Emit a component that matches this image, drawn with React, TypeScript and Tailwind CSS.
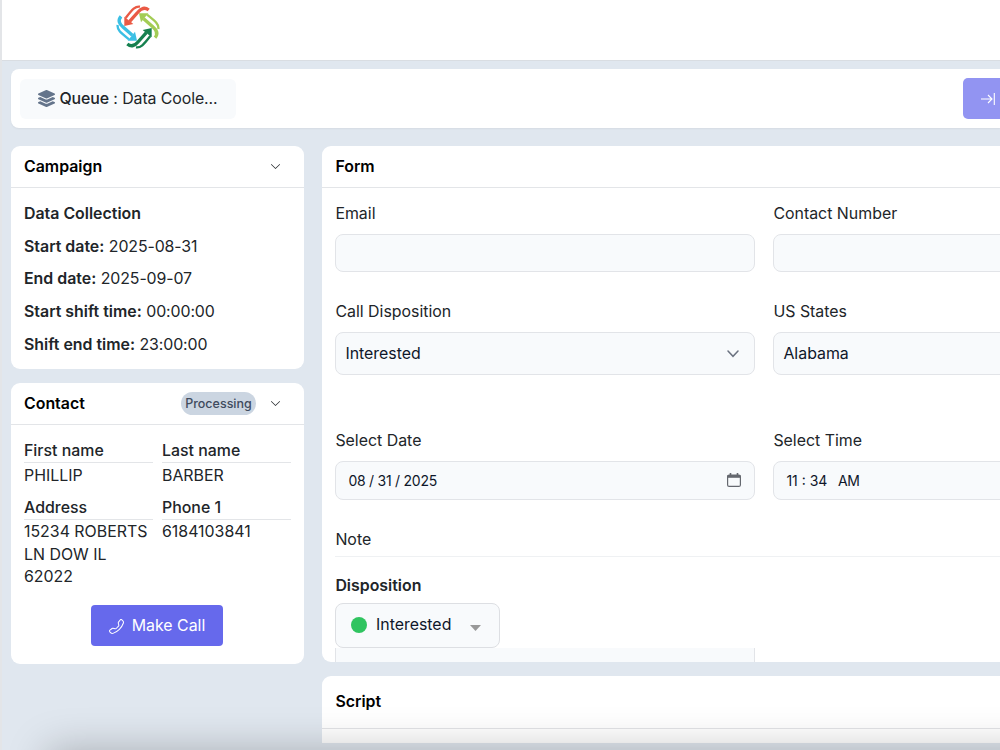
import React from "react";
import { FaLayerGroup } from "react-icons/fa";
import { BsChevronDown, BsTelephone } from "react-icons/bs";

const campaignRows = [
  { label: "Start date:", value: "2025-08-31" },
  { label: "End date:", value: "2025-09-07" },
  { label: "Start shift time:", value: "00:00:00" },
  { label: "Shift end time:", value: "23:00:00" },
];

const logoArrows = [
  { angle: 0, color: "#ea5a45" },
  { angle: 90, color: "#a3cc55" },
  { angle: 180, color: "#16804f" },
  { angle: 270, color: "#3bbfe4" },
];

const Logo = () => (
  <svg width="44" height="44" viewBox="-66 -66 132 132">
    {logoArrows.map((arrow) => (
      <g key={arrow.angle} transform={`rotate(${arrow.angle})`}>
        <path
          d="M6 -61C-8 -63 -16 -54 -37 -27"
          fill="none"
          stroke={arrow.color}
          strokeWidth="7"
        />
        <path
          d="M32 -51C20 -61 10 -57 0 -45L-25 -17"
          fill="none"
          stroke={arrow.color}
          strokeWidth="10"
        />
        <path d="M-41 -3L-41 -31L-14 -9Z" fill={arrow.color} />
      </g>
    ))}
  </svg>
);

const Field = ({ label, children }: { label: string; children: React.ReactNode }) => (
  <div className="flex flex-col">
    <label className="h-6 leading-[23px]">{label}</label>
    {children}
  </div>
);

const ContactItem = ({ label, value }: { label: string; value: string }) => (
  <div>
    <div className="h-[23px] border-b border-[#e3e5e8] font-medium leading-[22px]">{label}</div>
    <div className="pt-[1.5px] leading-[22.6px]">{value}</div>
  </div>
);

const App = () => {
  return (
    <div className="relative flex h-[750px] w-[1000px] flex-col overflow-hidden border-l-2 border-[#e3e5e8] bg-[#e0e7ef] font-['Inter',sans-serif] text-[15.9px] text-[#212529]">
      {/* Header */}
      <header className="h-[61px] shrink-0 border-b border-[#d9dde2] bg-white pl-[114px] pt-[5px]">
        <Logo />
      </header>

      {/* Toolbar */}
      <div className="ml-[9px] mt-2 flex h-[59px] shrink-0 items-center justify-between rounded-l-lg bg-white pl-[9px] shadow-xs">
        <div className="flex h-10 w-[216px] items-center rounded-md bg-[#f8fafc] pl-[18px]">
          <FaLayerGroup className="mr-[4.5px] size-[17px] text-[#64748b]" />
          <span className="pt-px tracking-[-0.1px]">
            <span className="font-medium">Queue</span> : Data Coole...
          </span>
        </div>
        <button className="flex h-[41px] w-[37px] items-center rounded-l-[5px] bg-[#9294f2] pl-[18px]">
          <svg width="14" height="12" viewBox="0 0 14 12" fill="none" stroke="white" strokeWidth="1.1">
            <path d="M0 6H10.5M7 2L11 6L7 10M13.3 0V12" />
          </svg>
        </button>
      </div>

      <div className="flex gap-[18px] pl-[9px] pt-[18px]">
        {/* Left column */}
        <div className="flex w-[293px] shrink-0 flex-col gap-[14px]">
          <section className="h-[223px] rounded-[9px] bg-white">
            <div className="flex h-[41.5px] items-center justify-between border-b border-[#e3e5e8] pl-[13px] pr-[23px]">
              <h2 className="pt-[2px] font-semibold text-black">Campaign</h2>
              <BsChevronDown className="size-[11px]" />
            </div>
            <div className="flex flex-col gap-[10px] px-[13px] pt-[15.3px] leading-[22.7px]">
              <div className="font-semibold">Data Collection</div>
              {campaignRows.map((row) => (
                <div key={row.label}>
                  <span className="font-semibold">{row.label}</span>{" "}
                  <span className="tracking-[-0.1px]">{row.value}</span>
                </div>
              ))}
            </div>
          </section>

          <section className="h-[281px] rounded-[9px] bg-white">
            <div className="flex h-[42px] items-center border-b border-[#e3e5e8] pl-[13px] pr-[23px]">
              <h2 className="flex-1 pt-px font-semibold text-black">Contact</h2>
              <span className="mr-[14px] flex h-[23px] w-[75px] items-center justify-center rounded-full bg-[#cbd5e1] pt-px text-[12.5px] font-medium text-[#3f4b5e]">
                Processing
              </span>
              <BsChevronDown className="size-[11px]" />
            </div>
            <div className="grid grid-cols-[129px_129px] gap-x-[9px] gap-y-[9.5px] px-[13px] pt-[15px]">
              <ContactItem label="First name" value="PHILLIP" />
              <ContactItem label="Last name" value="BARBER" />
              <ContactItem label="Address" value="15234 ROBERTS LN DOW IL 62022" />
              <ContactItem label="Phone 1" value="6184103841" />
            </div>
            <button className="ml-[80px] mt-[16.4px] flex h-[41px] w-[132px] items-center justify-center gap-2 rounded-[4px] bg-[#6669ec] pt-px text-white">
              <BsTelephone className="size-[15px] -scale-x-100" />
              Make Call
            </button>
          </section>
        </div>

        {/* Right column */}
        <div className="flex min-w-0 flex-1 flex-col gap-[14px]">
          <section className="h-[516px] overflow-hidden rounded-l-[9px] bg-white">
            <div className="flex h-[41.5px] items-center border-b border-[#e3e5e8] pl-[13.4px]">
              <h2 className="pt-[2px] font-semibold text-black">Form</h2>
            </div>
            <div className="grid grid-cols-[420px_420px] gap-x-[18px] pl-[13.4px] pt-[14px]">
              <Field label="Email">
                <div className="mb-[28px] mt-[8px] h-[38px] rounded-lg border border-[#e2e4e8] bg-[#f8fafc]" />
              </Field>
              <Field label="Contact Number">
                <div className="mb-[28px] mt-[8px] h-[38px] rounded-lg border border-[#e2e4e8] bg-[#f8fafc]" />
              </Field>
              <Field label="Call Disposition">
                <div className="mb-[54.5px] mt-[8px] flex h-[43px] items-center justify-between rounded-lg border border-[#e2e4e8] bg-[#f8fafc] pl-[9px] pr-[15px] pt-[2px] text-[#0f172a]">
                  Interested
                  <svg width="12" height="8" viewBox="0 0 12 8" fill="none" stroke="#6b7280" strokeWidth="1.5" strokeLinecap="round">
                    <path d="M1 1L6 6.3L11 1" />
                  </svg>
                </div>
              </Field>
              <Field label="US States">
                <div className="mb-[54.5px] mt-[8px] flex h-[43px] items-center rounded-lg border border-[#e2e4e8] bg-[#f8fafc] pl-[9px] pt-[2px] text-[#0f172a]">
                  Alabama
                </div>
              </Field>
              <Field label="Select Date">
                <div className="mb-[27px] mt-[7.5px] flex h-[39px] items-center justify-between rounded-lg border border-[#e2e4e8] bg-[#f8fafc] pl-[12px] pr-[13px] text-[14px] text-[#0f172a]">
                  <span className="tracking-[-0.25px]">08 / 31 / 2025</span>
                  <svg width="14" height="14" viewBox="0 0 14 14" fill="none" stroke="#65686f" strokeWidth="1.2">
                    <rect x="0.6" y="2" width="12.8" height="11.4" rx="1.5" />
                    <path d="M0.6 3.4H13.4" strokeWidth="2.8" />
                    <path d="M3.5 0V3M10.5 0V3" strokeWidth="1.6" />
                  </svg>
                </div>
              </Field>
              <Field label="Select Time">
                <div className="mb-[27px] mt-[7.5px] flex h-[39px] items-center gap-[10.5px] rounded-lg border border-[#e2e4e8] bg-[#f8fafc] pl-[12px] text-[14px] text-[#0f172a]">
                  <span>11 : 34</span>
                  <span className="tracking-[-0.3px]">AM</span>
                </div>
              </Field>
            </div>
            <div className="pl-[13.4px]">
              <div className="h-[30px] border-b border-[#eff1f3] leading-[26px]">Note</div>
              <div className="mt-[16px] h-[25px] font-semibold leading-[26px]">Disposition</div>
              <div className="mt-[5px] flex h-[45px] w-[165px] items-center rounded-lg border-[1.5px] border-[#dddfe3] bg-[#f8fafc] pb-px pl-[14.6px] text-[#0f172a]">
                <span className="mr-[9px] size-4 rounded-full bg-[#30c460]" />
                Interested
                <svg className="ml-[19px] mt-[7px]" width="11" height="6" viewBox="0 0 11 6">
                  <path d="M0 0H11L5.5 6Z" fill="#999" />
                </svg>
              </div>
              <div className="h-[30px] w-[420px] border-x border-[#e2e4e8] bg-[#f8fafc]" />
            </div>
          </section>

          <section className="h-[67px] rounded-tl-[9px] bg-white">
            <div className="flex h-[53px] items-center border-b border-[#e3e5e8] pl-[13.4px]">
              <h2 className="pb-px font-semibold text-black">Script</h2>
            </div>
          </section>
        </div>
      </div>

      {/* Shadow rising from the bottom edge */}
      <div className="absolute -right-20 left-[52px] top-[756px] h-20 shadow-[0_0_40px_6px_rgba(0,0,0,0.25)]" />
    </div>
  );
};

export default App;
